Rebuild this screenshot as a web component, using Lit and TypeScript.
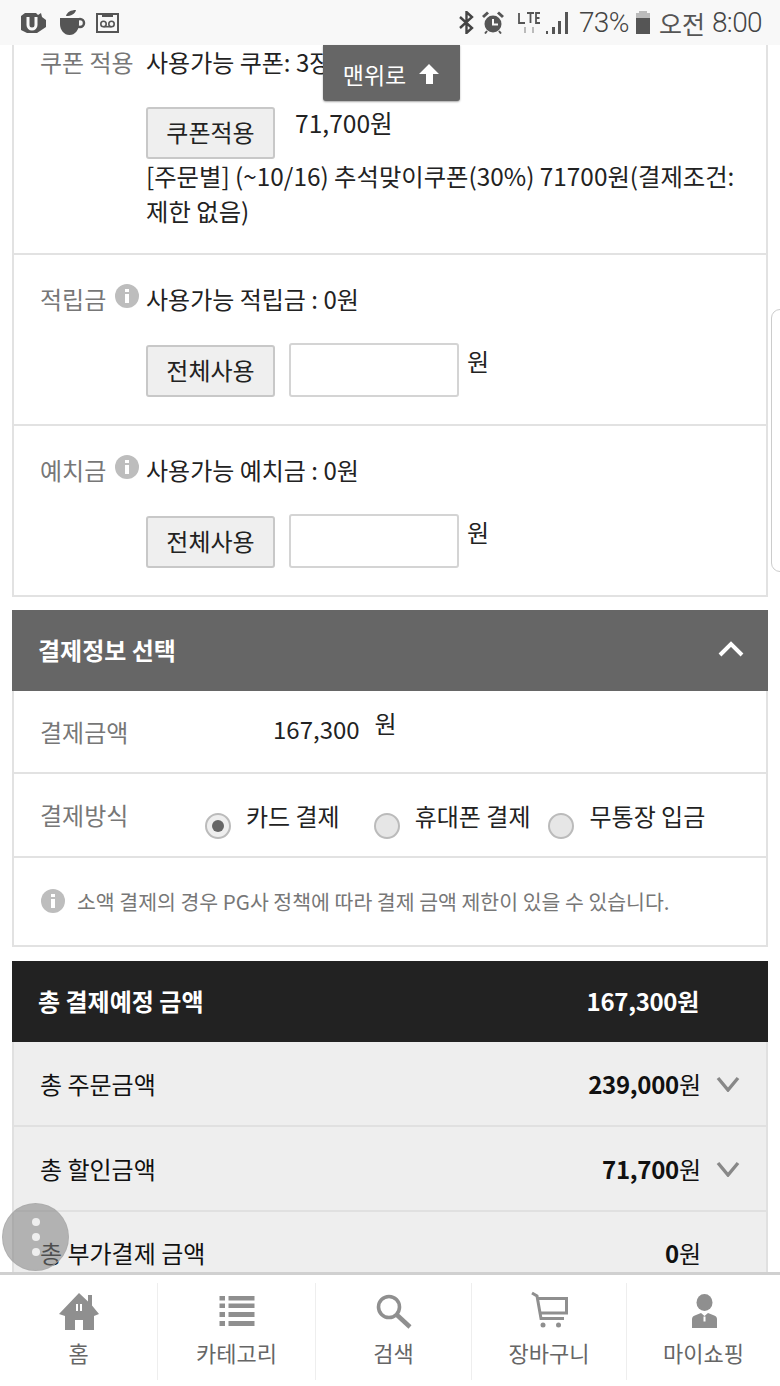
import { LitElement, html, css } from "lit";
import { customElement } from "lit/decorators.js";

const info = html`<svg class="info" viewBox="0 0 24 24"><circle cx="12" cy="12" r="12" fill="#bdbdbd"/><rect x="10" y="10" width="4" height="9" fill="#fff"/><rect x="10" y="5" width="4" height="3" fill="#fff"/></svg>`;

@customElement("app-root")
export class AppRoot extends LitElement {
  static styles = css`
    :host { display: block; width: 780px; height: 1386px; overflow: hidden; position: relative; background: #fff;
      font-family: "Noto Sans CJK KR", "Liberation Sans", sans-serif; color: #222; font-size: 24px; }
    * { box-sizing: border-box; }
    .status { height: 45px; background: #f8f8f8; display: flex; align-items: center; padding: 0 18px 0 21px; color: #555; }
    .status .left { display: flex; align-items: center; flex: 1; }
    .status .right { display: flex; align-items: center; font-family: "Roboto", "Noto Sans CJK KR", sans-serif; font-size: 28px; font-weight: 300; letter-spacing: -0.6px; color: #444; }
    .status svg { display: block; }
    .ml13 { margin-left: 13px; }
    .ml10 { margin-left: 10px; }
    .ml14 { margin-left: 14px; }
    .ml8 { margin-left: 8px; }
    .ml5 { margin-left: 5px; }
    .ml7 { margin-left: 7px; }
    .ml11 { margin-left: 11px; }
    .ml9 { margin-left: 9px; }
    .am { font-size: 25px; letter-spacing: 0; font-weight: 400; color: #555; }
    .main { height: 1227px; overflow: hidden; padding: 0 12px; background: #fff; }
    .card { border: 2px solid #e2e2e2; border-top: 0; width: 756px; }
    .row { border-bottom: 2px solid #e2e2e2; display: grid; grid-template-columns: 106px 1fr; padding-left: 26px; line-height: 30px; }
    .row:last-child { border-bottom: 0; height: 169px; }
    .coupon { height: 210px; padding-top: 2px; }
    .point { height: 171px; padding-top: 29px; }
    .lab { color: #777; display: flex; gap: 9px; white-space: nowrap; }
    .info { width: 24px; height: 24px; display: block; flex: none; }
    .line { display: flex; align-items: flex-start; }
    .btn { width: 129px; height: 52px; background: #efefef; border: 2px solid #c8c8c8; border-radius: 3px; display: flex; align-items: center; justify-content: center; padding-bottom: 3px; margin-top: 31px; color: #222; }
    .coupon .btn { margin-top: 30px; }
    .price { margin: 30px 0 0 20px; font-size: 24.6px; }
    .desc { line-height: 35px; margin-top: -1px; width: 605px; font-size: 24.35px; }
    .inp { width: 170px; height: 54px; background: #fff; border: 2px solid #d4d4d4; border-radius: 3px; margin: 29px 8px 0 14px; }
    .won { margin-top: 32px; }
    .sec-h { margin-top: 13px; height: 81px; background: #666; color: #fff; font-weight: 700; display: flex; align-items: center; justify-content: space-between; padding: 0 24px 3px 26px; width: 756px; }
    .pay { border: 2px solid #e2e2e2; border-top: 0; width: 756px; }
    .pay-row { border-bottom: 2px solid #e2e2e2; padding-left: 26px; display: flex; }
    .amount { height: 83px; align-items: flex-start; }
    .amount .lab { margin-top: 23px; width: 233px; }
    .amount .val { margin-top: 20px; line-height: 36px; }
    .amount .w { margin: 14px 0 0 15px; line-height: 36px; }
    .method { height: 84px; }
    .method .lab { margin-top: 23px; width: 165px; }
    .opt { display: flex; align-items: flex-start; }
    .o2 { margin-left: 34px; }
    .o3 { margin-left: 18px; }
    .radio { width: 26px; height: 26px; border-radius: 50%; background: #e6e6e6; border: 2px solid #bbb; margin-top: 39px; display: flex; align-items: center; justify-content: center; flex: none; }
    .radio.on { background: #eee; }
    .radio.on::after { content: ""; width: 12px; height: 12px; border-radius: 50%; background: #666; }
    .opt span { margin: 25px 0 0 15px; line-height: 34px; white-space: nowrap; }
    .notice { height: 87px; border-bottom: 0; padding: 0 0 2px 27px; align-items: center; gap: 12px; font-size: 20.5px; color: #777; }
    .total { margin-top: 14px; width: 756px; }
    .t-head { height: 81px; background: #222; color: #fff; font-weight: 700; display: flex; align-items: center; justify-content: space-between; padding: 0 69px 2px 26px; }
    .num { letter-spacing: -0.3px; }
    .t-row { height: 85px; background: #eee; border: 2px solid #e0e0e0; border-top: 0; display: flex; align-items: center; padding: 0 26px; color: #111; }
    .t-row .l { flex: 1; }
    .t-row b { font-weight: 700; letter-spacing: -0.3px; }
    .t-row svg { margin-left: 15px; }
    .t-last { height: 100px; align-items: flex-start; padding-top: 23px; padding-right: 65px; }
    .tabs { position: absolute; left: 0; right: 0; top: 1272px; height: 114px; background: #fff; border-top: 3px solid #d0d0d0; display: grid; grid-template-columns: 158px 158px 156px 155px 153px; padding-top: 8px; }
    .tab { height: 97px; border-right: 1px solid #eee; display: flex; flex-direction: column; align-items: center; color: #666; font-size: 22px; padding-top: 8px; }
    .tab:last-child { border-right: 0; }
    .tab svg { display: block; height: 40px; width: 44px; }
    .tab span { margin-top: 5px; line-height: 32px; }
    .top-btn { position: absolute; left: 323px; top: 45px; width: 137px; height: 56px; background: #666; color: #fff; border-radius: 0 0 3px 3px; box-shadow: 0 1px 2px rgba(0,0,0,.35); display: flex; align-items: center; justify-content: center; gap: 12px; font-size: 23px; padding-top: 1px; }
    .fab { position: absolute; left: 2px; top: 1203px; width: 67px; height: 68px; border-radius: 50%; background: rgba(130,130,130,.55); border: 1px solid rgba(170,170,170,.7); display: flex; flex-direction: column; align-items: center; justify-content: center; gap: 7px; }
    .fab i { width: 8px; height: 8px; border-radius: 50%; background: #eee; display: block; }
    .edge { position: absolute; left: 771px; top: 309px; width: 12px; height: 263px; border: 1px solid #ccc; border-radius: 9px 0 0 9px; background: #fff; }
  `;

  render() {
    const point = (label: string) => html`
      <div class="row point">
        <div class="lab">${label}${info}</div>
        <div>
          <div>사용가능 ${label} : 0원</div>
          <div class="line">
            <div class="btn">전체사용</div><div class="inp"></div><div class="won">원</div>
          </div>
        </div>
      </div>`;
    const chev = html`<svg width="24" height="16" viewBox="0 0 24 16"><path d="M2 2l10 12L22 2" fill="none" stroke="#888" stroke-width="3.4"/></svg>`;
    return html`
      <div class="status">
        <div class="left">
          <svg width="26" height="20" viewBox="0 0 26 20"><path d="M4 0h11l2 2 3-2 1 4 4 3v7l-9 6H6l-6-3V3z" fill="#555"/><path d="M7 4v8a4 4 0 0 0 8 0V4" fill="none" stroke="#f8f8f8" stroke-width="3"/></svg>
          <svg class="ml13" width="26" height="25" viewBox="0 0 26 25"><path d="M6 6c1-4 5-6 10-6-1 4-5 6-10 6z" fill="#555"/><path d="M0 8h19v6c0 6-4 11-9.500 11S0 20 0 14z" fill="#555"/><circle cx="20" cy="13" r="4" fill="none" stroke="#555" stroke-width="2.500"/></svg>
          <svg class="ml10" width="23" height="20" viewBox="0 0 23 20"><rect x="1" y="1" width="21" height="18" fill="none" stroke="#555" stroke-width="2"/><path d="M6 1h11v3H6z" fill="#555"/><circle cx="7.500" cy="11" r="2.700" fill="none" stroke="#555" stroke-width="1.600"/><circle cx="15.500" cy="11" r="2.700" fill="none" stroke="#555" stroke-width="1.600"/><path d="M7.500 13.700h8" stroke="#555" stroke-width="1.600"/></svg>
        </div>
        <div class="right">
          <svg width="15" height="23" viewBox="0 0 15 23"><path d="M1 6l12 11-5.500 5V1L13 6 1 17" fill="none" stroke="#444" stroke-width="2.400"/></svg>
          <svg class="ml8" width="22" height="23" viewBox="0 0 22 23"><circle cx="11" cy="13" r="8.500" fill="#555"/><path d="M11 8v5.500h5" fill="none" stroke="#f8f8f8" stroke-width="2"/><path d="M1 6l5-4.500M21 6l-5-4.500" stroke="#555" stroke-width="3"/><path d="M5 20l-2 2.500M17 20l2 2.500" stroke="#555" stroke-width="2"/></svg>
          <svg class="ml14" width="23" height="23" viewBox="0 0 23 23"><path d="M1 2v10h6M9 2h7M12.500 2v10M22 2h-4v10h4M18 7h3.500" fill="none" stroke="#555" stroke-width="1.800"/><path d="M7 16v6M15 16v6" stroke="#bbb" stroke-width="2"/></svg>
          <svg class="ml5" width="22" height="22" viewBox="0 0 22 22"><path d="M0 19h2v3H0zM6 15h3v7H6zM12 9h3v13h-3zM19 0h3v22h-3z" fill="#555"/></svg>
          <span class="ml11">73%</span>
          <svg class="ml7" width="14" height="23" viewBox="0 0 14 23"><path d="M3 0h8v2h3v5H0V2h3z" fill="#bbb"/><path d="M0 7h14v16H0z" fill="#555"/></svg>
          <span class="am ml9">오전</span>
          <span class="ml7">8:00</span>
        </div>
      </div>
      <div class="main">
        <div class="card">
          <div class="row coupon">
            <div class="lab">쿠폰 적용</div>
            <div>
              <div>사용가능 쿠폰: 3장</div>
              <div class="line"><div class="btn">쿠폰적용</div><div class="price">71,700원</div></div>
              <div class="desc">[주문별] (~10/16) 추석맞이쿠폰(30%) 71700원(결제조건: 제한 없음)</div>
            </div>
          </div>
          ${point("적립금")}
          ${point("예치금")}
        </div>
        <div class="sec-h"><span>결제정보 선택</span><svg width="26" height="18" viewBox="0 0 26 18"><path d="M2 15L13 4l11 11" fill="none" stroke="#fff" stroke-width="4"/></svg></div>
        <div class="pay">
          <div class="pay-row amount"><div class="lab">결제금액</div><div class="val">167,300</div><div class="w">원</div></div>
          <div class="pay-row method">
            <div class="lab">결제방식</div>
            <div class="opt"><div class="radio on"></div><span>카드 결제</span></div>
            <div class="opt o2"><div class="radio"></div><span>휴대폰 결제</span></div>
            <div class="opt o3"><div class="radio"></div><span>무통장 입금</span></div>
          </div>
          <div class="pay-row notice">${info}<span>소액 결제의 경우 PG사 정책에 따라 결제 금액 제한이 있을 수 있습니다.</span></div>
        </div>
        <div class="total">
          <div class="t-head"><span>총 결제예정 금액</span><span class="num">167,300원</span></div>
          <div class="t-row"><span class="l">총 주문금액</span><span><b>239,000</b>원</span>${chev}</div>
          <div class="t-row"><span class="l">총 할인금액</span><span><b>71,700</b>원</span>${chev}</div>
          <div class="t-row t-last"><span class="l">총 부가결제 금액</span><span><b>0</b>원</span></div>
        </div>
      </div>
      <div class="tabs">
        <div class="tab"><svg viewBox="0 0 44 40"><path d="M22 2l9 8.500V4h4v10.500L42 23l-5 2v14H26V29h-8v10H8V25l-6-2z" fill="#8f8f8f"/><path d="M19 13h2v7h-2zM23 13h2v7h-2z" fill="#fff"/></svg><span>홈</span></div>
        <div class="tab"><svg viewBox="0 0 44 40"><path d="M4.500 5h5.500v4.500H4.500zM13.500 5h26v4.500h-26zM4.500 12.500h5.500V17H4.500zM13.500 12.500h26V17h-26zM4.500 21h5.500v5H4.500zM13.500 21h26v5h-26zM4.500 30h5.500v5H4.500zM13.500 30h26v5h-26z" fill="#8f8f8f"/></svg><span>카테고리</span></div>
        <div class="tab"><svg viewBox="0 0 44 40"><circle cx="17" cy="16" r="10.500" fill="none" stroke="#8f8f8f" stroke-width="3.600"/><path d="M25 24l13 12" stroke="#8f8f8f" stroke-width="4.500"/></svg><span>검색</span></div>
        <div class="tab"><svg viewBox="0 0 44 40"><path d="M5 2l5 3 4 22.500h23M10 7.500h29.500V22H13" fill="none" stroke="#8f8f8f" stroke-width="3"/><circle cx="16" cy="34" r="2.500" fill="#8f8f8f"/><circle cx="31.500" cy="34" r="2.500" fill="#8f8f8f"/></svg><span>장바구니</span></div>
        <div class="tab"><svg viewBox="0 0 44 40"><ellipse cx="22.500" cy="11.500" rx="8" ry="8.500" fill="#8f8f8f"/><path d="M10 37v-9q0-3 4-4l5-2 3.500 3 3.500-3 5 2q4 1 4 4v9z" fill="#8f8f8f"/><path d="M21.500 25.500h2v5h-2z" fill="#fff"/></svg><span>마이쇼핑</span></div>
      </div>
      <div class="top-btn"><span>맨위로</span><svg width="22" height="22" viewBox="0 0 22 22"><path d="M11 1l10 10h-6v10H8V11H1z" fill="#fff"/></svg></div>
      <div class="fab"><i></i><i></i><i></i></div>
      <div class="edge"></div>
    `;
  }
}
